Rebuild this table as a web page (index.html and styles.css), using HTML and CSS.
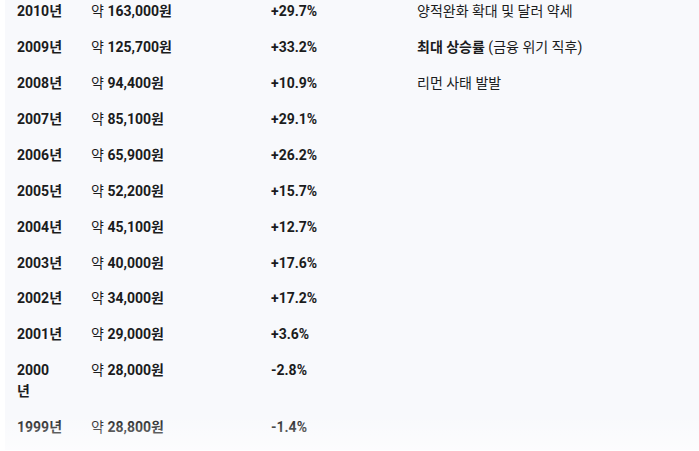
FILE: index.html
```html
<!DOCTYPE html>
<html lang="ko">
<head>
<meta charset="utf-8">
<link rel="stylesheet" href="styles.css">
</head>
<body>
<div class="viewport">
  <div class="table">
    <div class="row"><div class="cell year">2010년</div><div class="cell"><span class="pre">약</span> <b>163,000원</b></div><div class="cell pct">+29.7%</div><div class="cell desc">양적완화 확대 및 달러 약세</div></div>
    <div class="row"><div class="cell year">2009년</div><div class="cell"><span class="pre">약</span> <b>125,700원</b></div><div class="cell pct">+33.2%</div><div class="cell desc"><b>최대 상승률</b> (금융 위기 직후)</div></div>
    <div class="row"><div class="cell year">2008년</div><div class="cell"><span class="pre">약</span> <b>94,400원</b></div><div class="cell pct">+10.9%</div><div class="cell desc">리먼 사태 발발</div></div>
    <div class="row"><div class="cell year">2007년</div><div class="cell"><span class="pre">약</span> <b>85,100원</b></div><div class="cell pct">+29.1%</div><div class="cell desc"></div></div>
    <div class="row"><div class="cell year">2006년</div><div class="cell"><span class="pre">약</span> <b>65,900원</b></div><div class="cell pct">+26.2%</div><div class="cell desc"></div></div>
    <div class="row"><div class="cell year">2005년</div><div class="cell"><span class="pre">약</span> <b>52,200원</b></div><div class="cell pct">+15.7%</div><div class="cell desc"></div></div>
    <div class="row"><div class="cell year">2004년</div><div class="cell"><span class="pre">약</span> <b>45,100원</b></div><div class="cell pct">+12.7%</div><div class="cell desc"></div></div>
    <div class="row"><div class="cell year">2003년</div><div class="cell"><span class="pre">약</span> <b>40,000원</b></div><div class="cell pct">+17.6%</div><div class="cell desc"></div></div>
    <div class="row"><div class="cell year">2002년</div><div class="cell"><span class="pre">약</span> <b>34,000원</b></div><div class="cell pct">+17.2%</div><div class="cell desc"></div></div>
    <div class="row"><div class="cell year">2001년</div><div class="cell"><span class="pre">약</span> <b>29,000원</b></div><div class="cell pct">+3.6%</div><div class="cell desc"></div></div>
    <div class="row"><div class="cell year">2000<br>년</div><div class="cell"><span class="pre">약</span> <b>28,000원</b></div><div class="cell pct">-2.8%</div><div class="cell desc"></div></div>
    <div class="row"><div class="cell year">1999년</div><div class="cell"><span class="pre">약</span> <b>28,800원</b></div><div class="cell pct">-1.4%</div><div class="cell desc"></div></div>
  </div>
  <div class="fade"></div>
</div>
</body>
</html>
```

FILE: styles.css
```css
html, body {
  margin: 0;
  padding: 0;
  background: #ffffff;
}
body {
  font-family: Roboto, "Noto Sans CJK KR", sans-serif;
  font-size: 14px;
  color: #1b1c1d;
  overflow: hidden;
  height: 451px;
}
.viewport {
  position: relative;
  height: 451px;
  overflow: hidden;
}
.table {
  margin-left: 5px;
  margin-top: -6px;
  background: #f8f9fc;
  padding-bottom: 4px;
}
.row {
  display: grid;
  grid-template-columns: 74px 180px 146px 1fr;
}
.cell {
  padding: 7.45px 12px;
  line-height: 21px;
  white-space: nowrap;
}
.year {
  font-weight: 700;
}
.pct {
  font-weight: 700;
}
.pre {
  font-weight: 400;
}
b {
  font-weight: 700;
}
.fade {
  position: absolute;
  left: 0;
  right: 0;
  bottom: 0;
  height: 36px;
  background: linear-gradient(to bottom, rgba(255,255,255,0), rgba(255,255,255,0.6));
  pointer-events: none;
}
```
